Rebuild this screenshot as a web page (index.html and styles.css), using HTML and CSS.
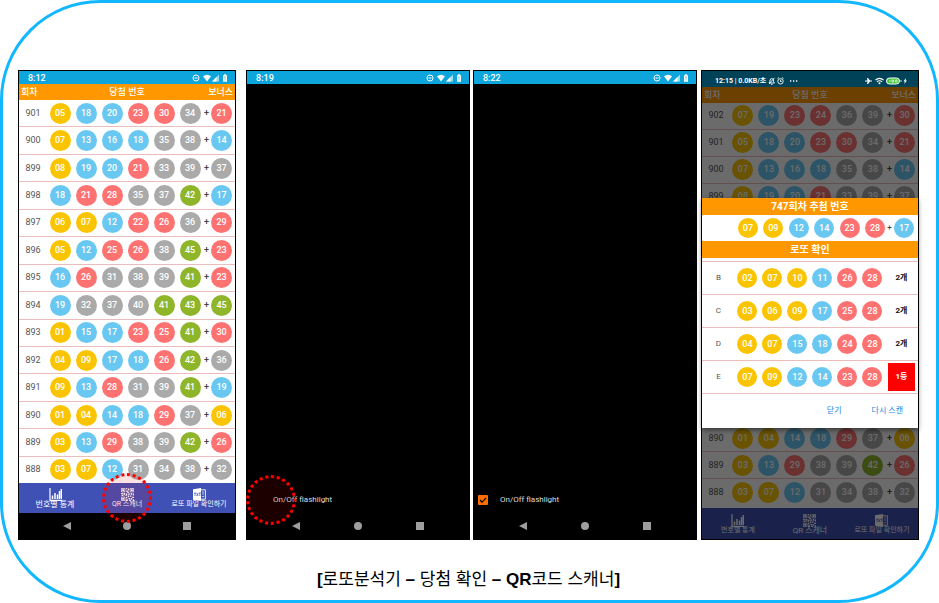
FILE: index.html
```html
<!DOCTYPE html>
<html lang="ko">
<head>
<meta charset="utf-8">
<title>로또분석기</title>
<link rel="stylesheet" href="styles.css">
</head>
<body>
<svg class="defs" aria-hidden="true">
  <symbol id="i-status" viewBox="0 0 38 10">
    <circle cx="4" cy="5" r="3" fill="none" stroke="#fff"/>
    <path d="M2.5 5h3" stroke="#fff"/>
    <path d="M11 3.2Q15 .2 19 3.2L15 8.6z" fill="#fff"/>
    <path d="M27 1.5V8.5H20z" fill="#fff" opacity=".6"/>
    <path d="M24.5 4V8.5H20z" fill="#fff"/>
    <path d="M31 2.2h1V1.2h2v1h1v6.6h-4z" fill="#fff"/>
    <path d="M33 3.5v2M33 6.4v1" stroke="#0ea5dc" stroke-width=".8"/>
  </symbol>
  <symbol id="i-chart" viewBox="0 0 13 13">
    <path d="M1 0v12.3h12" fill="none" stroke="#fff" stroke-width="1.2"/>
    <path d="M3.500 7.500v3.500M6 5v6M8.500 6.500v4.500M10.500 3v8M12.300 1v10" stroke="#fff" stroke-width="1.500"/>
  </symbol>
  <symbol id="i-qr" viewBox="0 0 21 21">
    <g fill="none" stroke="#fff" stroke-width="1.3"><path d="M.7.7h5.6v5.6H.7zM14.7.7h5.6v5.6h-5.6zM.7 14.7h5.6v5.6H.7z"/></g>
    <g fill="#fff"><path d="M2 2h3v3H2zM16 2h3v3h-3zM2 16h3v3H2z"/>
    <path d="M8 0h2v2H8zM11 1h2v3h-2zM8 4h3v2H8zM10 6h3v2h-3zM0 8h3v2H0zM4 8h3v3H4zM8 9h2v3H8zM11 9h4v2h-4zM16 8h2v3h-2zM19 9h2v3h-2zM1 11h3v2H1zM6 12h3v1H6zM11 12h2v3h-2zM14 12h3v2h-3zM8 14h2v3H8zM18 14h3v2h-3zM12 16h3v2h-3zM16 16h2v3h-2zM8 18h3v3H8zM13 19h3v2h-3zM19 18h2v3h-2z"/></g>
  </symbol>
  <symbol id="i-file" viewBox="0 0 13 13">
    <path d="M0 1.2 8 0v13L0 11.8z" fill="#fff"/>
    <path d="M8 1.8h4.4v9.4H8" fill="none" stroke="#fff" stroke-width=".9"/>
    <path d="M9 4h2M9 6h2M9 8.5h2" stroke="#fff" stroke-width=".7"/>
    <path d="M1 5h2M2 5v3M3.6 5l1.6 3M5.2 5 3.6 8M5.8 5h2M6.8 5v3" stroke="#3f51b5" stroke-width=".7"/>
  </symbol>
  <symbol id="i-back" viewBox="0 0 8 8"><path d="M8 0v8L0 4z" fill="#9e9e9e"/></symbol>
  <symbol id="i-home" viewBox="0 0 8 8"><circle cx="4" cy="4" r="4" fill="#9e9e9e"/></symbol>
  <symbol id="i-recent" viewBox="0 0 8 8"><path d="M0 0h8v8H0z" fill="#9e9e9e"/></symbol>
</svg>

<main class="frame">
  <div class="phones">

    <section class="phone">
      <header class="status"><span>8:12</span><svg class="status-icons"><use href="#i-status"/></svg></header>
      <div class="list"><table class="rounds" data-from="901"></table></div>
      <nav class="tabs">
        <button class="tab tab-large"><svg><use href="#i-chart"/></svg>번호별 통계</button>
        <button class="tab"><svg><use href="#i-qr"/></svg>QR 스캐너<i class="ring"></i></button>
        <button class="tab"><svg><use href="#i-file"/></svg>로또 파일 확인하기</button>
      </nav>
      <footer class="keys"><svg><use href="#i-back"/></svg><svg><use href="#i-home"/></svg><svg><use href="#i-recent"/></svg></footer>
    </section>

    <section class="phone phone-scan">
      <header class="status"><span>8:19</span><svg class="status-icons"><use href="#i-status"/></svg></header>
      <div class="camera">
        <label class="flash"><span class="tick"><input type="checkbox"><i class="ring"></i></span>On/Off flashlight</label>
      </div>
      <footer class="keys"><svg><use href="#i-back"/></svg><svg><use href="#i-home"/></svg><svg><use href="#i-recent"/></svg></footer>
    </section>

    <section class="phone phone-scan">
      <header class="status"><span>8:22</span><svg class="status-icons"><use href="#i-status"/></svg></header>
      <div class="camera">
        <label class="flash"><span class="tick"><input type="checkbox" checked><svg class="check" viewBox="0 0 10 10"><path d="M2 5l2 2.2L8.2 2.8" fill="none" stroke="#000" stroke-width="1.2"/></svg></span>On/Off flashlight</label>
      </div>
      <footer class="keys"><svg><use href="#i-back"/></svg><svg><use href="#i-home"/></svg><svg><use href="#i-recent"/></svg></footer>
    </section>

    <section class="phone phone-result">
      <header class="status status-dark">
        <span>12:15 | 0.0KB/초</span>
        <svg class="alerts" viewBox="0 0 30 8"><g fill="none" stroke="#fff" stroke-width=".9"><path d="M1 6h5.5L5.5 4.5V3a1.8 1.8 0 0 0-3.5 0v1.5zM3 7.300h1.500M6.500.8 1 7"/><circle cx="12.500" cy="4.300" r="2.700"/><path d="M12.500 2.800v1.700h1.200M9.500 1.500l1.300-1M15.500 1.500l-1.300-1"/></g><path d="M22 4h1.300M25 4h1.300M28 4h1.300" stroke="#fff" stroke-width="1.300"/></svg>
        <svg class="power" viewBox="0 0 44 8"><path d="M1 3.500h2.500L3 1h1l2 2.500h2v1H6L4 7H3l.5-2.500H1z" fill="#fff"/><g fill="none" stroke="#fff" stroke-width="1.100"><path d="M11.500 3Q15.500-.3 19.500 3M13 4.800q2.500-2 5 0"/></g><circle cx="15.500" cy="6.300" r="1" fill="#fff"/><rect x="22.500" y="1" width="13" height="6" rx="3" fill="#45c43c" stroke="#fff"/><path d="M26 3v2M28 3h1.500v2h-1.500zM31.500 3h1.500v2h-1.500z" fill="none" stroke="#fff" stroke-width=".7"/><path d="M37 3.200v1.600" stroke="#fff"/><path d="M42 1l-2.500 3.300h1.300L40.200 7 43 3.500h-1.500z" fill="#fff"/></svg>
      </header>
      <div class="dimmed">
        <div class="list"><table class="rounds" data-from="902"></table></div>
        <nav class="tabs tabs-tall">
          <button class="tab"><svg><use href="#i-chart"/></svg>번호별 통계</button>
          <button class="tab tab-large"><svg><use href="#i-qr"/></svg>QR 스캐너</button>
          <button class="tab"><svg><use href="#i-file"/></svg>로또 파일 확인하기</button>
        </nav>
        <div class="shade"></div>
        <div class="dialog" role="dialog" aria-label="로또 확인">
          <h2>747회차 추첨 번호</h2>
          <div class="draw"><div class="draw-balls"></div><span class="plus">+</span><span class="draw-bonus"></span></div>
          <h2>로또 확인</h2>
          <table class="checks"></table>
          <div class="actions"><button>닫기</button><button>다시 스캔</button></div>
        </div>
      </div>
    </section>

  </div>
  <p class="caption"><b>[</b>로또분석기 <b>–</b> 당첨 확인 <b>–</b> <b>QR</b>코드 스캐너<b>]</b></p>
</main>
<script src="app.js"></script>
</body>
</html>
```
FILE: app.js
```js
const rounds = [
  [902, 7, 19, 23, 24, 36, 39, 30],
  [901, 5, 18, 20, 23, 30, 34, 21],
  [900, 7, 13, 16, 18, 35, 38, 14],
  [899, 8, 19, 20, 21, 33, 39, 37],
  [898, 18, 21, 28, 35, 37, 42, 17],
  [897, 6, 7, 12, 22, 26, 36, 29],
  [896, 5, 12, 25, 26, 38, 45, 23],
  [895, 16, 26, 31, 38, 39, 41, 23],
  [894, 19, 32, 37, 40, 41, 43, 45],
  [893, 1, 15, 17, 23, 25, 41, 30],
  [892, 4, 9, 17, 18, 26, 42, 36],
  [891, 9, 13, 28, 31, 39, 41, 19],
  [890, 1, 4, 14, 18, 29, 37, 6],
  [889, 3, 13, 29, 38, 39, 42, 26],
  [888, 3, 7, 12, 31, 34, 38, 32]
];

const checks = [
  ['B', [2, 7, 10, 11, 26, 28], '2개'],
  ['C', [3, 6, 9, 17, 25, 28], '2개'],
  ['D', [4, 7, 15, 18, 24, 28], '2개'],
  ['E', [7, 9, 12, 14, 23, 28], '1등']
];

const colours = ['yellow', 'blue', 'red', 'grey', 'green'];

// Balls are coloured by tens: 1-10, 11-20, 21-30, 31-40, 41-45.
function ball(n) {
  const colour = colours[Math.floor((n - 1) / 10)];
  return `<span class="ball ${colour}">${String(n).padStart(2, '0')}</span>`;
}

const cells = list => list.map(n => `<td>${ball(n)}</td>`).join('');

document.querySelectorAll('.rounds').forEach(table => {
  const rows = rounds.filter(r => r[0] <= Number(table.dataset.from));
  table.innerHTML =
    '<colgroup><col class="c-round"><col class="c-ball" span="6"><col class="c-plus"><col class="c-bonus"></colgroup>' +
    '<thead><tr><th>회차</th><th colspan="6">당첨 번호</th><th colspan="2">보너스</th></tr></thead><tbody>' +
    rows.map(r => `<tr><td>${r[0]}</td>${cells(r.slice(1, 7))}<td class="plus">+</td>${cells([r[7]])}</tr>`).join('') +
    '</tbody>';
});

document.querySelector('.draw-balls').innerHTML = [7, 9, 12, 14, 23, 28].map(ball).join('');
document.querySelector('.draw-bonus').innerHTML = ball(17);

document.querySelector('.checks').innerHTML =
  '<colgroup><col class="c-game"><col class="c-match" span="6"><col class="c-game"></colgroup><tbody>' +
  checks.map(([name, list, result]) =>
    `<tr><td>${name}</td>${cells(list)}<td><span class="result${result === '1등' ? ' win' : ''}">${result}</span></td></tr>`
  ).join('') + '</tbody>';
```
FILE: styles.css
```css
* { box-sizing: border-box; }

body {
  margin: 0;
  background: #fff;
  font-family: Roboto, "Noto Sans CJK KR", sans-serif;
  font-size: 8px;
  line-height: 1;
}

button {
  border: 0;
  padding: 0;
  background: none;
  font: inherit;
  color: inherit;
  white-space: nowrap;
}

.defs { display: none; }

.frame {
  display: flex;
  flex-direction: column;
  min-height: 100vh;
  padding: 67px 17px 9px 15px;
  border: 3px solid #12b7ff;
  border-radius: 100px;
}

.phones {
  display: flex;
  flex: 1;
}

.phone {
  display: flex;
  flex-direction: column;
  flex: 218 1 0;
  min-width: 0;
  border: 1px solid #000;
  background: #000;
}

.phone-scan { flex-grow: 224; margin-left: 3px; }
.phone:first-child + .phone-scan { margin-left: 10px; }
.phone-result { margin-left: 4px; }

/* Status bar */
.status {
  display: flex;
  align-items: center;
  justify-content: space-between;
  height: 13px;
  padding: 1px 5px 0 9px;
  background: #0ea5dc;
  color: #fff;
  font-weight: 500;
  font-size: 9px;
}

.status-icons { width: 38px; height: 10px; }

.status-dark {
  height: 16px;
  padding: 4px 10px 0 13px;
  background: #004358;
  font-size: 7px;
  font-weight: 700;
  white-space: nowrap;
}

.alerts { width: 30px; height: 8px; margin: 0 auto 0 2px; }
.power { width: 44px; height: 8px; }

/* Round list */
.list {
  display: flex;
  flex-direction: column;
  flex: 1;
  background: #fff;
}

table {
  width: 100%;
  table-layout: fixed;
  border-spacing: 0;
}

.rounds { flex: 1; }

.c-round { width: 28px; }
.c-ball { width: 26px; }
.c-plus { width: 7px; }
.c-bonus { width: 25px; }

th {
  height: 16px;
  padding: 0 2px;
  background: #ff9800;
  color: #fff;
  font-size: 9px;
  font-weight: 500;
  text-align: center;
  white-space: nowrap;
}

th:first-child { text-align: left; }
th:nth-child(2) { padding-left: 6px; }
th:last-child { text-align: right; }

td {
  padding: 0;
  border-bottom: 1px solid #ebbcbc;
  color: #555;
  font-size: 9px;
  text-align: center;
  vertical-align: middle;
}

.rounds td:last-child { padding-right: 2px; }
.rounds tr:last-child td { border-bottom: 0; }

.plus { color: #444; font-weight: 500; }

.ball {
  display: flex;
  align-items: center;
  justify-content: center;
  width: 21px;
  height: 21px;
  margin: 0 auto;
  border-radius: 50%;
  color: #fff;
  font-size: 9px;
  font-weight: 500;
}

.yellow { background: #fbc400; }
.blue { background: #69c8f2; }
.red { background: #ff7272; }
.grey { background: #aaa; }
.green { background: #8fb52b; }

/* App tabs */
.tabs {
  display: grid;
  grid-template-columns: repeat(3, 1fr);
  height: 30px;
  background: #3f51b5;
  color: #fff;
}

.tabs-tall { height: 31px; border-top: 1px solid #3f51b5; }

.tab {
  display: flex;
  flex-direction: column;
  align-items: center;
  justify-content: center;
  position: relative;
  font-size: 7px;
}

.tab-large { font-size: 8px; }
.tab svg { width: 13px; height: 13px; }

.ring {
  position: absolute;
  top: 50%;
  left: 50%;
  width: 50px;
  height: 50px;
  transform: translate(-50%, -50%);
  border: 3px dotted #f00;
  border-radius: 50%;
  background: rgba(255, 0, 0, .11);
}

/* System keys */
.keys {
  display: grid;
  grid-template-columns: repeat(3, 1fr);
  align-items: center;
  justify-items: center;
  height: 26px;
  padding: 0 18px;
}

.keys svg { width: 8px; height: 8px; }

/* Scanner */
.camera {
  display: flex;
  flex: 1;
  align-items: flex-end;
  padding: 0 4px 8px;
}

.flash {
  display: flex;
  align-items: center;
  gap: 12px;
  color: #ddd;
}

.tick { position: relative; width: 10px; height: 10px; }

.tick input {
  display: block;
  appearance: none;
  width: 10px;
  height: 10px;
  margin: 0;
  border-radius: 1px;
  background: #000;
}

.tick input:checked { background: #ff6d00; }
.check { position: absolute; inset: 0; }
.tick .ring { left: 20px; }

/* Result dialog */
.dimmed {
  display: flex;
  flex-direction: column;
  flex: 1;
  position: relative;
}

.dimmed .list { padding-bottom: 3px; }

/* Rows fully behind the dialog */
.dimmed .rounds tbody tr:nth-child(n+5):nth-child(-n+12) { visibility: hidden; }

.shade {
  position: absolute;
  inset: 0;
  background: rgba(0, 0, 0, .58);
}

.dialog {
  position: absolute;
  top: 111px;
  left: 0;
  right: 0;
  background: #fff;
  box-shadow: 0 2px 5px rgba(0, 0, 0, .5);
}

.dialog h2 {
  margin: 0;
  background: #ff9800;
  color: #fff;
  font-size: 10px;
  font-weight: 700;
  line-height: 17px;
  text-align: center;
}

.dialog .ball { width: 20px; height: 20px; }

.draw {
  display: flex;
  align-items: center;
  height: 26px;
  padding: 0 4px 0 36px;
}

.draw-balls {
  display: flex;
  flex: 1;
  justify-content: space-between;
}

.draw-balls .ball { margin: 0; }
.draw .plus { width: 9px; text-align: center; }

.c-game { width: 33px; }
.c-match { width: 25px; }

.checks { margin-top: 3px; border-top: 1px solid #ebbcbc; }
.checks td { height: 33px; font-size: 8px; }

.result {
  display: block;
  margin: 0 3px;
  color: #111;
  font-weight: 700;
  line-height: 28px;
}

.win { background: #f00; color: #fff; }

.actions {
  display: flex;
  justify-content: flex-end;
  gap: 30px;
  padding: 13px 15px 13px;
  color: #2089e0;
}

.caption {
  margin: 0;
  padding-top: 28px;
  color: #000;
  font-family: "Liberation Sans", "Noto Sans CJK KR", sans-serif;
  font-size: 17px;
  line-height: 23px;
  text-align: center;
}
```
